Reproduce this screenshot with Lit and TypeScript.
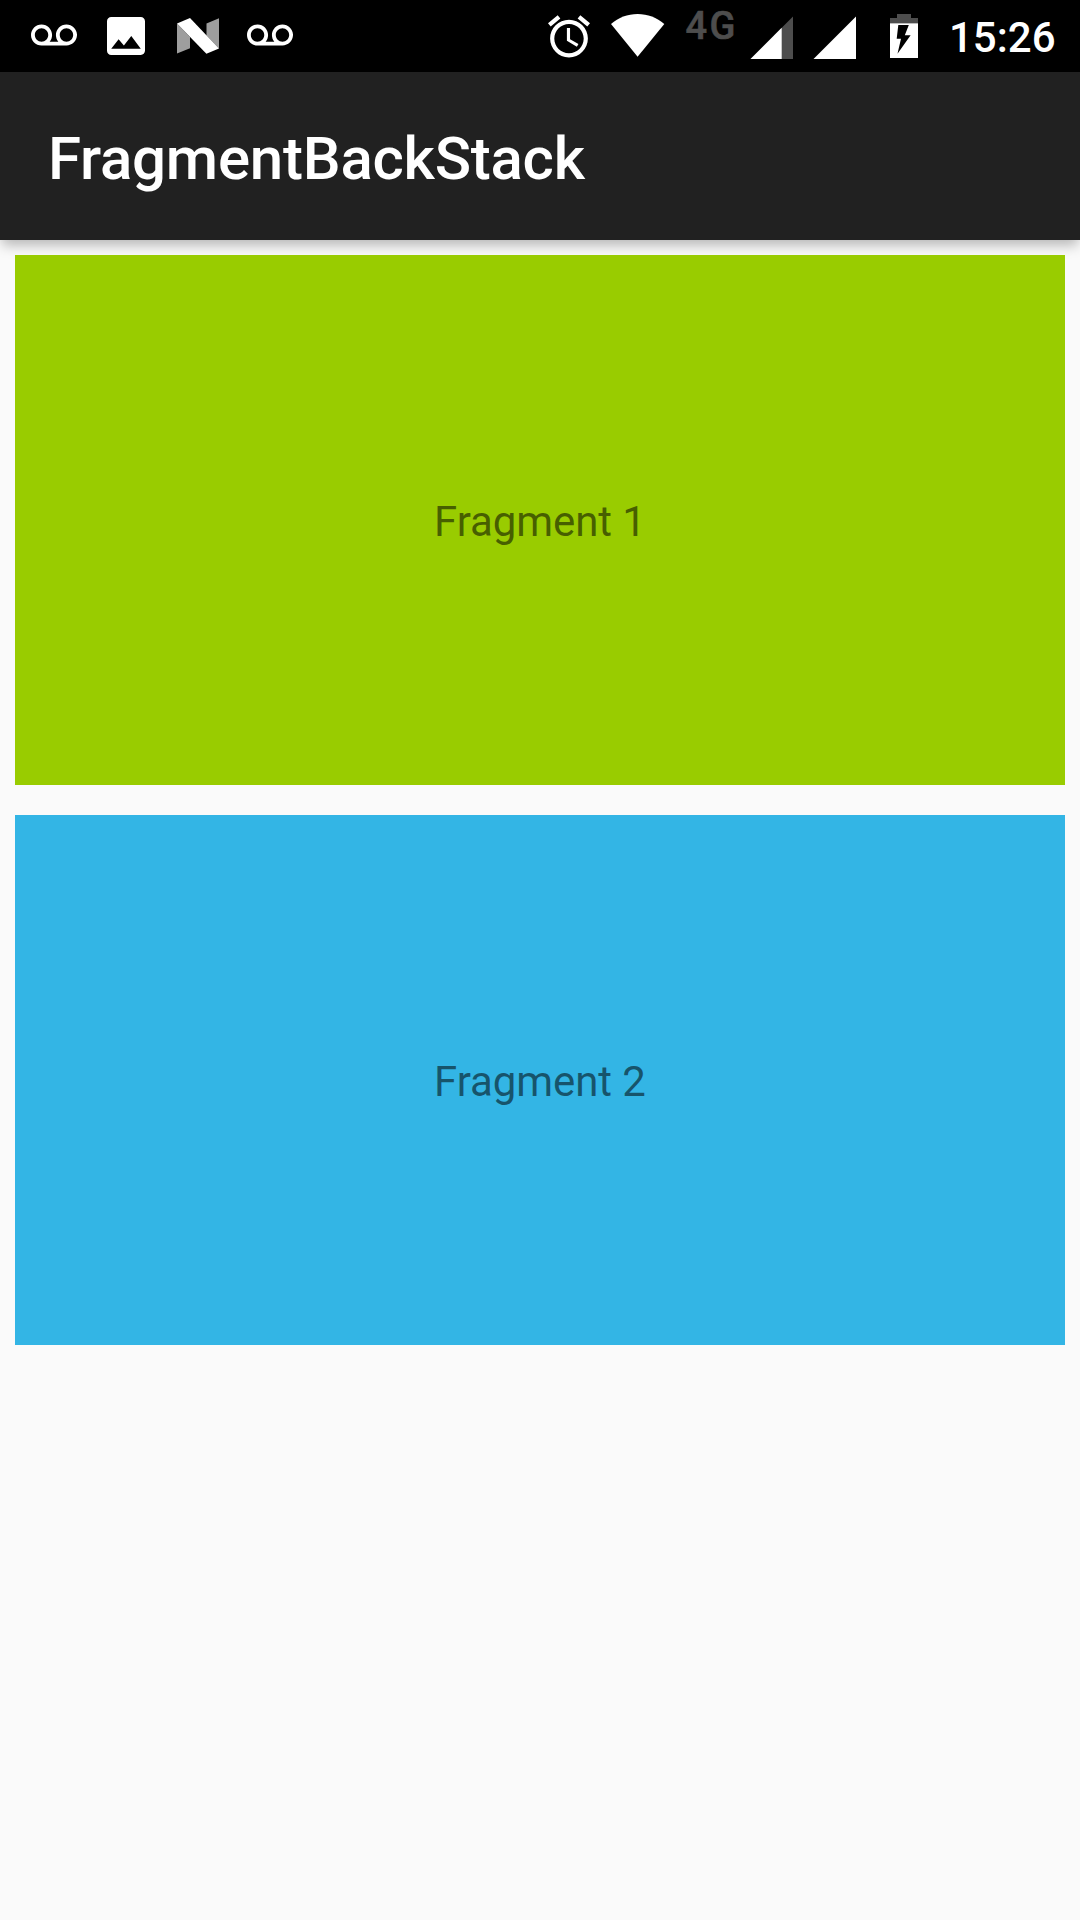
import { LitElement, html, css, svg } from "lit";
import { customElement, property } from "lit/decorators.js";

// Every status icon is drawn in a 72px tall strip, the height of the bar.
const voicemail = html`<svg width="46" height="72" viewBox="0 0 46 72">
  <path fill="#fff" transform="translate(0 12.9) scale(1.917)" d="M18.5 6C15.46 6 13 8.46 13 11.5c0 1.33.47 2.55 1.26 3.5H9.74c.79-.95 1.26-2.17 1.26-3.5C11 8.46 8.54 6 5.5 6S0 8.46 0 11.5 2.46 17 5.5 17h13c3.04 0 5.5-2.46 5.5-5.5S21.54 6 18.5 6zm-13 9C3.57 15 2 13.43 2 11.5S3.57 8 5.5 8 9 9.57 9 11.5 7.43 15 5.5 15zm13 0c-1.93 0-3.5-1.57-3.5-3.5S16.57 8 18.5 8 22 9.57 22 11.5 20.43 15 18.5 15z"/>
</svg>`;

const picture = html`<svg width="38" height="72" viewBox="0 0 38 72">
  <path fill="#fff" transform="translate(-6.33 10.67) scale(2.111)" d="M21 19V5c0-1.1-.9-2-2-2H5c-1.1 0-2 .9-2 2v14c0 1.1.9 2 2 2h14c1.1 0 2-.9 2-2zM8.5 13.5l2.5 3.01L14.5 12l4.5 6H5l3.5-4.5z"/>
</svg>`;

const nougat = html`<svg width="42" height="72" viewBox="177 0 42 72">
  <path fill="#9e9e9e" d="M177 23.4L190 37v11.2l-13 5.4zM219 18.2v30.3L206.5 35.5v-12z"/>
  <path fill="#fff" d="M177 23.4L190 18l29 30.4-12.6 5.3z"/>
</svg>`;

const alarm = html`<svg width="42" height="72" viewBox="0 0 42 72">
  <path fill="#fff" transform="translate(-4.2 11.3) scale(2.1)" d="M22 5.72l-4.6-3.86-1.29 1.53 4.6 3.86L22 5.72zM7.88 3.39L6.6 1.86 2 5.71l1.29 1.53 4.59-3.85zM12.5 8H11v6l4.75 2.85.75-1.23-4-2.37V8zM12 4c-4.97 0-9 4.03-9 9s4.02 9 9 9c4.97 0 9-4.03 9-9s-4.03-9-9-9zm0 16c-3.87 0-7-3.13-7-7s3.13-7 7-7 7 3.13 7 7-3.13 7-7 7z"/>
</svg>`;

const wifi = html`<svg width="54" height="72" viewBox="611 0 54 72">
  <path fill="#fff" d="M637.6 56.8L611 24C618.5 17.6 627.5 14 637.6 14s19.2 3.6 26.7 10z"/>
</svg>`;

const signal = (full: boolean) => html`<svg width="43" height="72" viewBox="0 0 43 72">
  <path fill=${full ? "#fff" : "#4d4d4d"} d="M.5 59L43 16.5V59z"/>
  ${full ? null : svg`<path fill="#fff" d="M.5 59L31.7 27.8V59z"/>`}
</svg>`;

const battery = html`<svg width="28" height="72" viewBox="890 0 28 72">
  <path fill="#4d4d4d" d="M897 14h14v4h7v5.5h-28V18h7z"/>
  <path fill="#fff" d="M890 23.3h28V58h-28z"/>
  <path fill="#000" d="M898.3 25h10.5l-4 10.3h5.8L897.5 53.8l3.5-15h-4.3z"/>
</svg>`;

@customElement("status-bar")
export class StatusBar extends LitElement {
  static styles = css`
    :host {
      display: flex;
      justify-content: space-between;
      height: 72px;
      box-sizing: border-box;
      padding: 0 24px 0 31px;
      background: #000;
      color: #fff;
      font-family: Roboto, sans-serif;
      font-weight: 500;
    }
    svg { display: block; flex: none; }
    .notices, .system { display: flex; }
    .notices { gap: 30px; }
    .notices :nth-child(3) { margin-left: 2px; }
    .notices :nth-child(4) { margin-left: -2px; }
    .wifi { margin-left: 20.5px; }
    .network {
      width: 50px;
      margin: 0 14.5px 0 21px;
      padding-top: 5px;
      color: #4d4d4d;
      font-size: 38px;
      font-weight: 500;
      -webkit-text-stroke: 0.6px #4d4d4d;
      line-height: 43px;
      letter-spacing: 2.5px;
      white-space: nowrap;
    }
    .second { margin-left: 20px; }
    .battery { margin-left: 34px; }
    .clock {
      width: 107px;
      margin-left: 31px;
      padding-top: 13px;
      font-size: 42px;
      line-height: 50px;
      white-space: nowrap;
    }
  `;
  render() {
    return html`
      <div class="notices">${voicemail}${picture}${nougat}${voicemail}</div>
      <div class="system">
        <div>${alarm}</div>
        <div class="wifi">${wifi}</div>
        <div class="network">4G</div>
        <div>${signal(false)}</div>
        <div class="second">${signal(true)}</div>
        <div class="battery">${battery}</div>
        <div class="clock">15:26</div>
      </div>
    `;
  }
}

@customElement("fragment-pane")
export class FragmentPane extends LitElement {
  @property() label = "";
  @property({ reflect: true }) tone = "green";
  static styles = css`
    :host {
      display: flex;
      align-items: center;
      justify-content: center;
      height: 530px;
      box-sizing: border-box;
      padding-top: 3px;
      font: 400 42px/50px Roboto, sans-serif;
      letter-spacing: -0.08px;
      color: rgba(0, 0, 0, 0.54);
      background: #99cc00;
    }
    :host([tone="blue"]) { background: #33b5e5; }
  `;
  render() {
    return html`<span>${this.label}</span>`;
  }
}

@customElement("app-root")
export class AppRoot extends LitElement {
  static styles = css`
    :host {
      display: flex;
      flex-direction: column;
      height: 1920px;
      background: #fafafa;
      overflow: hidden;
    }
    .toolbar {
      display: flex;
      align-items: center;
      flex: none;
      height: 168px;
      box-sizing: border-box;
      padding: 6px 48px 0;
      background: #212121;
      color: #fff;
      font: 500 60px/70px Roboto, sans-serif;
      letter-spacing: -0.23px;
      box-shadow: 0 7px 12px -2px rgba(0, 0, 0, 0.28);
    }
    .content {
      display: flex;
      flex-direction: column;
      gap: 30px;
      padding: 15px;
    }
    .content > * { position: relative; }
  `;
  render() {
    return html`
      <status-bar></status-bar>
      <div class="toolbar">FragmentBackStack</div>
      <div class="content">
        <fragment-pane label="Fragment 1"></fragment-pane>
        <fragment-pane label="Fragment 2" tone="blue"></fragment-pane>
      </div>
    `;
  }
}
